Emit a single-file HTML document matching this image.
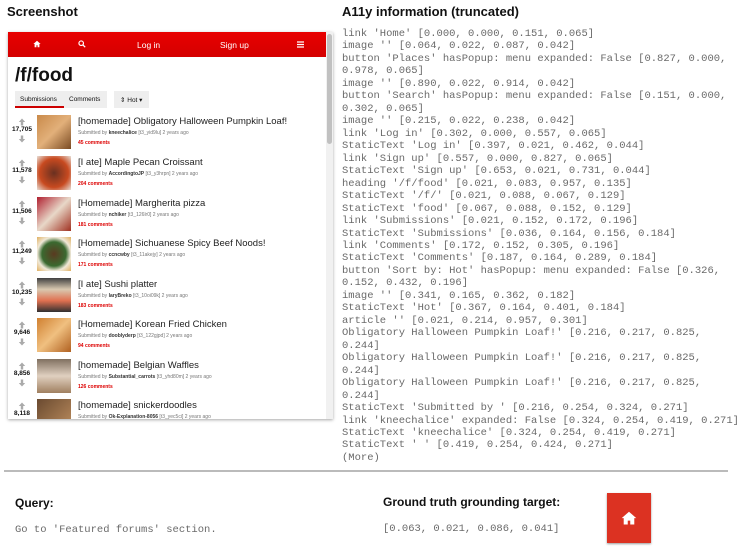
<!DOCTYPE html>
<html><head><meta charset="utf-8"><style>
*{margin:0;padding:0;box-sizing:border-box}
body{width:747px;height:549px;background:#fff;position:relative;overflow:hidden;font-family:"Liberation Sans",Arial,sans-serif;color:#111}
.abs{position:absolute}
.h{font-weight:bold;font-size:13px}
.mono{font-family:"Liberation Mono",monospace;font-size:10.5px;color:#6a6a6a;line-height:12.47px;white-space:pre}
.frame{left:8px;top:32px;width:325px;height:387px;background:#fff;box-shadow:0 1px 3px rgba(0,0,0,.35);overflow:hidden}
.nav{left:0;top:0;width:318px;height:25px;background:linear-gradient(#e80000,#d40000);color:#fff;font-size:8.5px}
.nav span{position:absolute;top:8px}
.sb{left:318px;top:0;width:7px;height:387px;background:#f1f1f1}
.sbt{left:319px;top:2px;width:5px;height:110px;background:#c1c1c1;border-radius:3px}
.item{position:absolute;left:0;width:318px;height:40px}
.score{position:absolute;left:0;width:28px;text-align:center;font-size:6.5px;font-weight:bold;top:10px}
.arr{position:absolute;left:10px}
.th{position:absolute;left:29px;top:-6px;width:34px;height:34px}
.t{position:absolute;left:70px;top:-5px;font-size:9.5px;color:#222;white-space:nowrap}
.s{position:absolute;left:70px;top:9px;font-size:5px;color:#777;white-space:nowrap}
.s b{color:#333}
.c{position:absolute;left:70px;top:19px;font-size:5px;color:#d00;font-weight:bold}
</style></head><body>
<svg width="0" height="0" style="position:absolute"><defs>
<symbol id="up" viewBox="0 0 8 8"><path d="M4 0.5L0.8 4H2.8V7.5H5.2V4H7.2z" fill="#aaa"/></symbol>
<symbol id="dn" viewBox="0 0 8 8"><path d="M4 7.5L0.8 4H2.8V0.5H5.2V4H7.2z" fill="#aaa"/></symbol>
</defs></svg>
<div class="abs h" style="left:7px;top:4px">Screenshot</div>
<div class="abs h" style="left:342px;top:4px">A11y information (truncated)</div>

<div class="abs frame">
 <div class="abs nav">
  <svg class="abs" style="left:25px;top:8px" width="8" height="8" viewBox="0 0 10 10"><path d="M5 1L0.5 5H2v4h2.3V6.5h1.4V9H8V5h1.5z" fill="#fff"/></svg>
  <svg class="abs" style="left:70px;top:8px" width="8" height="8" viewBox="0 0 10 10"><circle cx="4" cy="4" r="2.8" stroke="#fff" stroke-width="1.5" fill="none"/><path d="M6 6l3 3" stroke="#fff" stroke-width="1.6"/></svg>
  <span style="left:129px">Log in</span>
  <span style="left:212px">Sign up</span>
  <svg class="abs" style="left:289px;top:9px" width="7" height="7" viewBox="0 0 7 7"><path d="M0 1h7M0 3.5h7M0 6h7" stroke="#fff" stroke-width="1.2"/></svg>
 </div>
 <div class="abs sb"></div><div class="abs sbt"></div>
 <div class="abs" style="left:7px;top:33px;font-size:19px;font-weight:bold">/f/food</div>
 <div class="abs" style="left:7px;top:59px;width:92px;height:17px;background:#eee"></div>
 <div class="abs" style="left:7px;top:74px;width:49px;height:2px;background:#c00"></div>
 <div class="abs" style="left:12px;top:64px;font-size:6.5px">Submissions</div>
 <div class="abs" style="left:61px;top:64px;font-size:6.5px">Comments</div>
 <div class="abs" style="left:106px;top:59px;width:35px;height:17px;background:#eee;font-size:6.5px;padding:5px 0 0 6px">⇕ Hot ▾</div>

 <div class="item" style="top:89px"><svg class="arr" style="top:-3px" width="8" height="8"><use href="#up"/></svg><div class="score" style="top:5px">17,705</div><svg class="arr" style="top:14px" width="8" height="8"><use href="#dn"/></svg><div class="th" style="background:linear-gradient(135deg,#c98a4a,#e2b07a,#7a4a22)"></div><div class="t">[homemade] Obligatory Halloween Pumpkin Loaf!</div><div class="s">Submitted by <b>kneechalice</b> [t3_yid9lu] 2 years ago</div><div class="c">45 comments</div></div>
 <div class="item" style="top:130px"><svg class="arr" style="top:-3px" width="8" height="8"><use href="#up"/></svg><div class="score" style="top:5px">11,578</div><svg class="arr" style="top:14px" width="8" height="8"><use href="#dn"/></svg><div class="th" style="background:radial-gradient(#6a3020,#c84a20 60%,#e8e0d8)"></div><div class="t">[I ate] Maple Pecan Croissant</div><div class="s">Submitted by <b>AccordingtoJP</b> [t3_y3hrpn] 2 years ago</div><div class="c">204 comments</div></div>
 <div class="item" style="top:171px"><svg class="arr" style="top:-3px" width="8" height="8"><use href="#up"/></svg><div class="score" style="top:5px">11,506</div><svg class="arr" style="top:14px" width="8" height="8"><use href="#dn"/></svg><div class="th" style="background:linear-gradient(135deg,#b02030,#e8d8c8,#a03020)"></div><div class="t">[Homemade] Margherita pizza</div><div class="s">Submitted by <b>nchiker</b> [t3_126lr0] 2 years ago</div><div class="c">181 comments</div></div>
 <div class="item" style="top:211px"><svg class="arr" style="top:-3px" width="8" height="8"><use href="#up"/></svg><div class="score" style="top:5px">11,249</div><svg class="arr" style="top:14px" width="8" height="8"><use href="#dn"/></svg><div class="th" style="background:radial-gradient(#5a3a20,#3a6a30 50%,#f0e8d8 70%,#e0b060)"></div><div class="t">[Homemade] Sichuanese Spicy Beef Noods!</div><div class="s">Submitted by <b>ccncwby</b> [t3_11akejy] 2 years ago</div><div class="c">171 comments</div></div>
 <div class="item" style="top:252px"><svg class="arr" style="top:-3px" width="8" height="8"><use href="#up"/></svg><div class="score" style="top:5px">10,235</div><svg class="arr" style="top:14px" width="8" height="8"><use href="#dn"/></svg><div class="th" style="background:linear-gradient(#404040,#d8c8b0,#e07050,#303030)"></div><div class="t">[I ate] Sushi platter</div><div class="s">Submitted by <b>laryBreko</b> [t3_10oi09k] 2 years ago</div><div class="c">183 comments</div></div>
 <div class="item" style="top:292px"><svg class="arr" style="top:-3px" width="8" height="8"><use href="#up"/></svg><div class="score" style="top:5px">9,646</div><svg class="arr" style="top:14px" width="8" height="8"><use href="#dn"/></svg><div class="th" style="background:linear-gradient(135deg,#d08030,#f0c080,#b06020)"></div><div class="t">[Homemade] Korean Fried Chicken</div><div class="s">Submitted by <b>dooblyderp</b> [t3_122gjpd] 2 years ago</div><div class="c">94 comments</div></div>
 <div class="item" style="top:333px"><svg class="arr" style="top:-3px" width="8" height="8"><use href="#up"/></svg><div class="score" style="top:5px">8,856</div><svg class="arr" style="top:14px" width="8" height="8"><use href="#dn"/></svg><div class="th" style="background:linear-gradient(#807060,#e0d0c0,#a08060)"></div><div class="t">[homemade] Belgian Waffles</div><div class="s">Submitted by <b>Substantial_carrots</b> [t3_yhd80m] 2 years ago</div><div class="c">126 comments</div></div>
 <div class="item" style="top:373px"><svg class="arr" style="top:-3px" width="8" height="8"><use href="#up"/></svg><div class="score" style="top:5px">8,118</div><div class="th" style="background:linear-gradient(135deg,#6a4a30,#c09060)"></div><div class="t">[homemade] snickerdoodles</div><div class="s">Submitted by <b>Ok-Explanation-8056</b> [t3_yec5ci] 2 years ago</div></div>
</div>

<div class="abs mono" style="left:342px;top:28px">link 'Home' [0.000, 0.000, 0.151, 0.065]
image '' [0.064, 0.022, 0.087, 0.042]
button 'Places' hasPopup: menu expanded: False [0.827, 0.000,
0.978, 0.065]
image '' [0.890, 0.022, 0.914, 0.042]
button 'Search' hasPopup: menu expanded: False [0.151, 0.000,
0.302, 0.065]
image '' [0.215, 0.022, 0.238, 0.042]
link 'Log in' [0.302, 0.000, 0.557, 0.065]
StaticText 'Log in' [0.397, 0.021, 0.462, 0.044]
link 'Sign up' [0.557, 0.000, 0.827, 0.065]
StaticText 'Sign up' [0.653, 0.021, 0.731, 0.044]
heading '/f/food' [0.021, 0.083, 0.957, 0.135]
StaticText '/f/' [0.021, 0.088, 0.067, 0.129]
StaticText 'food' [0.067, 0.088, 0.152, 0.129]
link 'Submissions' [0.021, 0.152, 0.172, 0.196]
StaticText 'Submissions' [0.036, 0.164, 0.156, 0.184]
link 'Comments' [0.172, 0.152, 0.305, 0.196]
StaticText 'Comments' [0.187, 0.164, 0.289, 0.184]
button 'Sort by: Hot' hasPopup: menu expanded: False [0.326,
0.152, 0.432, 0.196]
image '' [0.341, 0.165, 0.362, 0.182]
StaticText 'Hot' [0.367, 0.164, 0.401, 0.184]
article '' [0.021, 0.214, 0.957, 0.301]
Obligatory Halloween Pumpkin Loaf!' [0.216, 0.217, 0.825,
0.244]
Obligatory Halloween Pumpkin Loaf!' [0.216, 0.217, 0.825,
0.244]
Obligatory Halloween Pumpkin Loaf!' [0.216, 0.217, 0.825,
0.244]
StaticText 'Submitted by ' [0.216, 0.254, 0.324, 0.271]
link 'kneechalice' expanded: False [0.324, 0.254, 0.419, 0.271]
StaticText 'kneechalice' [0.324, 0.254, 0.419, 0.271]
StaticText ' ' [0.419, 0.254, 0.424, 0.271]
(More)</div>

<div class="abs" style="left:4px;top:470px;width:724px;height:2px;background:#bbb"></div>
<div class="abs" style="left:15px;top:496px;font-size:12px;font-weight:bold">Query:</div>
<div class="abs mono" style="left:15px;top:524px">Go to 'Featured forums' section.</div>
<div class="abs" style="left:383px;top:495px;font-size:12px;font-weight:bold">Ground truth grounding target:</div>
<div class="abs mono" style="left:383px;top:523px">[0.063, 0.021, 0.086, 0.041]</div>
<div class="abs" style="left:607px;top:493px;width:44px;height:50px;background:#dc3222;box-shadow:0 1px 2px rgba(0,0,0,.4)">
 <svg class="abs" style="left:14px;top:18px" width="16" height="14" viewBox="0 0 10 9"><path d="M5 0.5L0.3 4.6H1.6V8.7h2.6V6.2h1.6v2.5h2.6V4.6h1.3z" fill="#fff"/></svg>
</div>
</body></html>
